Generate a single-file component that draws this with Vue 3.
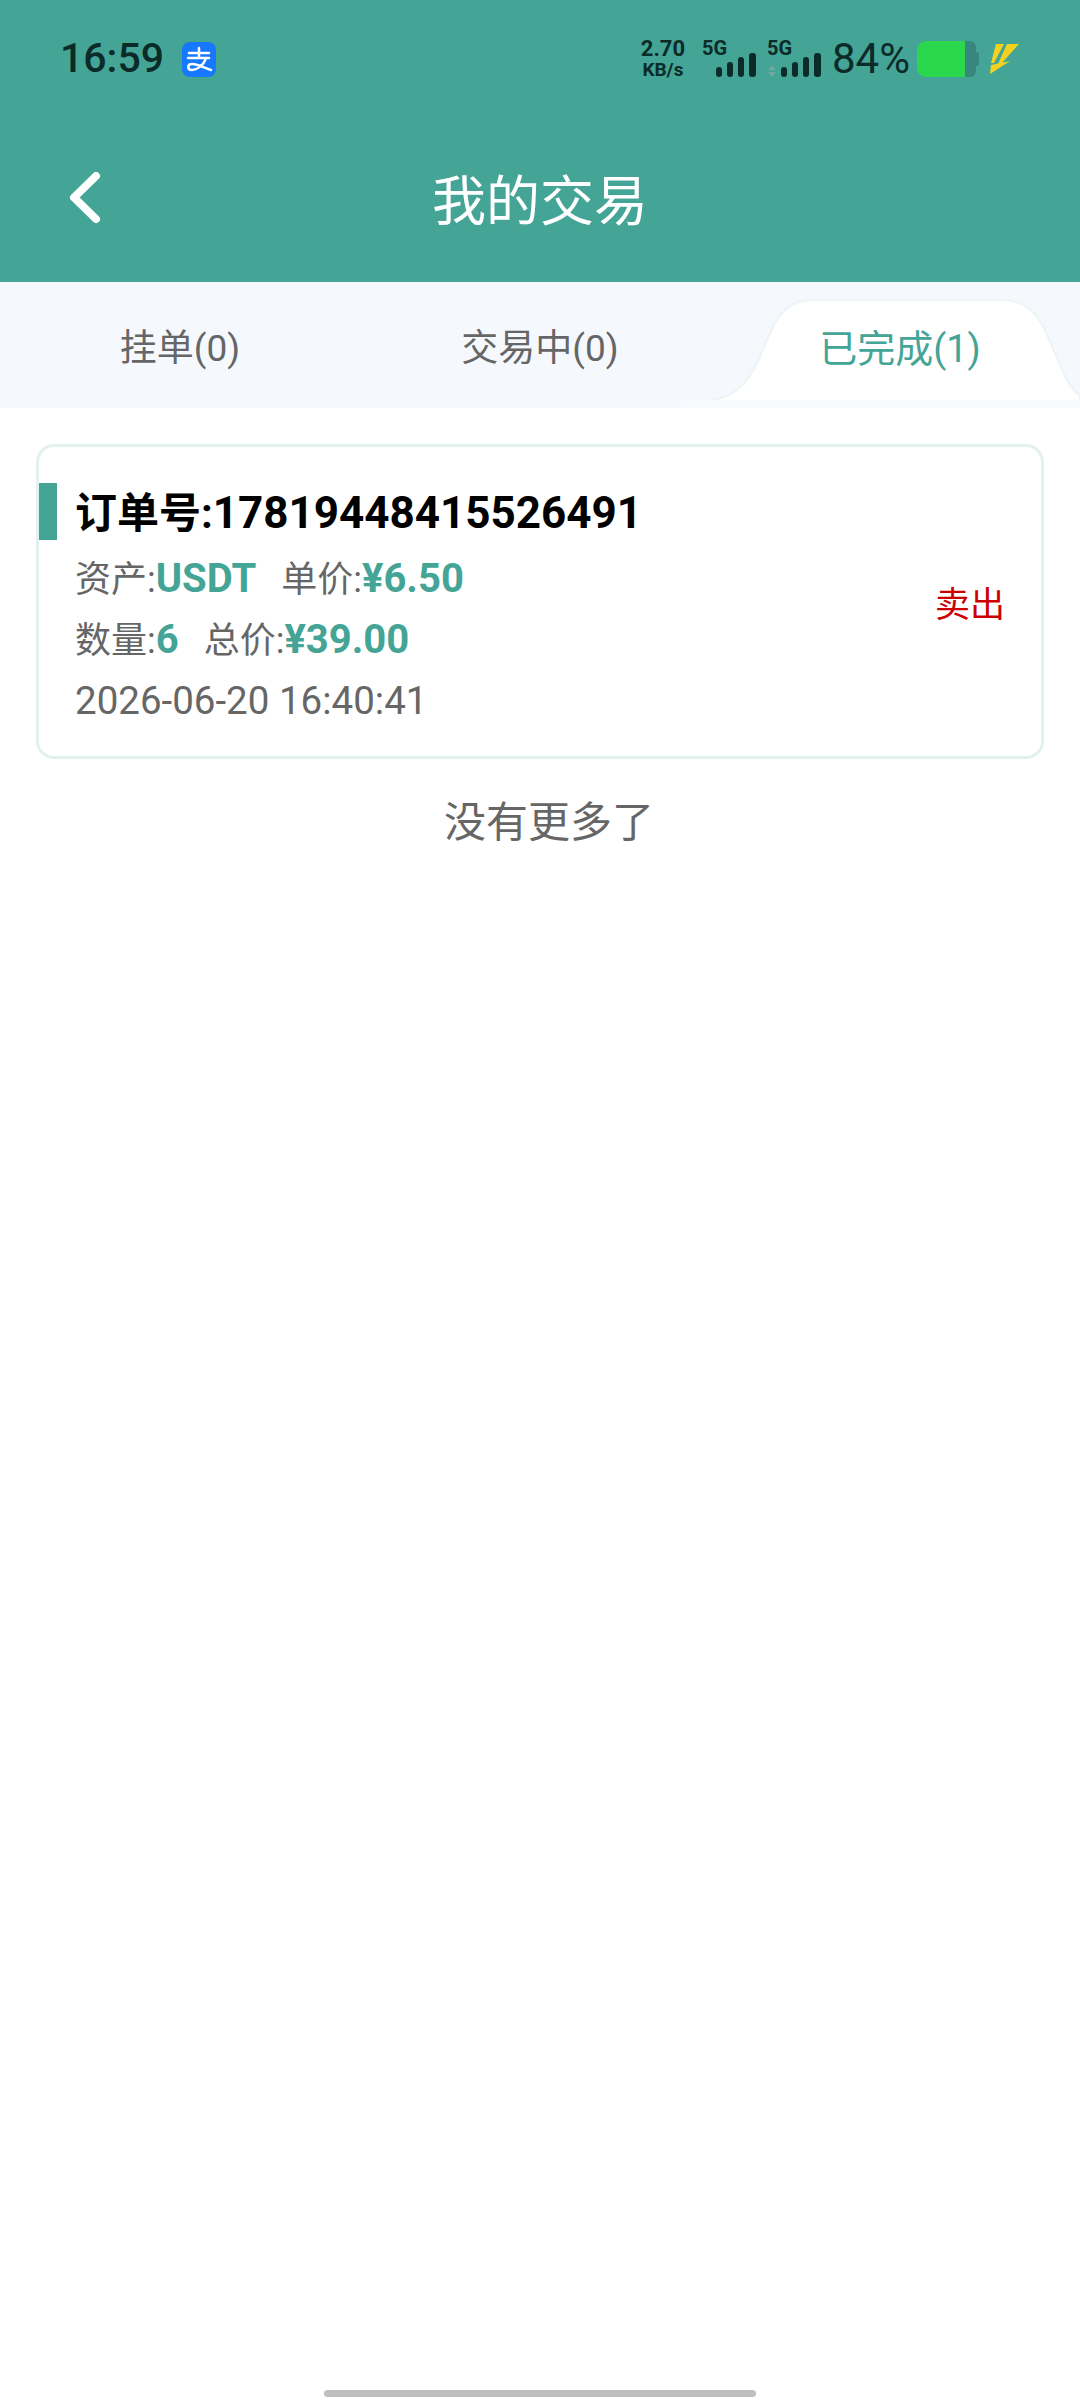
<script setup>
const tabs = [
  { label: '挂单(0)' },
  { label: '交易中(0)' },
  { label: '已完成(1)', active: true },
]

const order = {
  no: '17819448415526491',
  asset: 'USDT',
  price: '¥6.50',
  amount: '6',
  total: '¥39.00',
  time: '2026-06-20 16:40:41',
  side: '卖出',
}
</script>

<template>
  <div class="page">
    <header class="top">
      <div class="status">
        <div class="status-left">
          <span class="clock">16:59</span>
          <svg class="alipay" width="34" height="35" viewBox="0 0 34 35">
            <rect width="34" height="35" rx="8" fill="#1677ff" />
            <path d="M7 11h20M17 6v9M6 16h21M24 16c-2 7-9 12-14 12-5 0-5-6 0-6 6 0 12 4 19 6" fill="none" stroke="#fff" stroke-width="2.5" stroke-linecap="round" />
          </svg>
        </div>
        <div class="status-right">
          <div class="speed"><span>2.70</span><span class="unit">KB/s</span></div>
          <svg class="sim" width="54" height="50" viewBox="0 -6 54 50">
            <text x="0" y="15" class="sim-label">5G</text>
            <rect x="14" y="27" width="6" height="10" rx="3" />
            <rect x="25" y="22" width="6" height="15" rx="3" />
            <rect x="36" y="17" width="6" height="20" rx="3" />
            <rect x="47" y="13" width="7" height="24" rx="3" />
          </svg>
          <svg class="sim sim2" width="54" height="50" viewBox="0 -6 54 50">
            <text x="0" y="15" class="sim-label">5G</text>
            <path d="M1 30l4-5 4 5zM1 32l4 5 4-5z" fill="#6fa9a0" />
            <rect x="14" y="27" width="6" height="10" rx="3" />
            <rect x="25" y="22" width="6" height="15" rx="3" />
            <rect x="36" y="17" width="6" height="20" rx="3" />
            <rect x="47" y="13" width="7" height="24" rx="3" />
          </svg>
          <span class="percent">84%</span>
          <svg class="battery" width="64" height="38" viewBox="0 0 64 38">
            <path d="M49 1h5a6 6 0 0 1 6 6v24a6 6 0 0 1-6 6h-5z" fill="#38877f" />
            <rect x="60" y="12" width="3" height="14" rx="1.5" fill="#38877f" />
            <path d="M10 1h39v36H10a9 9 0 0 1-9-9V10a9 9 0 0 1 9-9z" fill="#2bd84d" />
          </svg>
          <svg class="bolt" width="32" height="30" viewBox="0 0 32 30">
            <path d="M8 0h8L6 19H3zM19 0h12L13 20h-3zM3 21l19-4L2 30z" fill="#f2d21f" />
          </svg>
        </div>
      </div>
      <div class="nav">
        <svg class="back" width="34" height="52" viewBox="0 0 34 52">
          <path d="M28 4L6 25.500 28 47" fill="none" stroke="#fff" stroke-width="8" stroke-linecap="round" stroke-linejoin="round" />
        </svg>
        <h1 class="title">我的交易</h1>
      </div>
    </header>

    <nav class="tabs">
      <svg class="tab-shape" width="400" height="109" viewBox="0 0 400 109">
        <path d="M0 102h20c30 0 46-14 58-40l14-32C100 12 112 1 132 1h190c20 0 32 9 42 28l14 32c6 14 12 30 22 35v6z" fill="#fff" stroke="#eef4f6" stroke-width="2" />
        <rect y="101" width="400" height="8" fill="#f7fbfe" />
      </svg>
      <span v-for="tab in tabs" :key="tab.label" class="tab" :class="{ active: tab.active }">{{ tab.label }}</span>
    </nav>

    <main class="list">
      <article class="card">
        <i class="mark"></i>
        <div class="info">
          <div class="order-no"><span class="order-label">订单号:</span>{{ order.no }}</div>
          <div class="row">
            <span>资产:<b>{{ order.asset }}</b></span>
            <span>单价:<b>{{ order.price }}</b></span>
          </div>
          <div class="row">
            <span>数量:<b>{{ order.amount }}</b></span>
            <span>总价:<b>{{ order.total }}</b></span>
          </div>
          <div class="row date">{{ order.time }}</div>
        </div>
        <span class="side">{{ order.side }}</span>
      </article>
      <p class="no-more">没有更多了</p>
    </main>

    <div class="home-bar"></div>
  </div>
</template>

<style scoped>
.page {
  position: relative;
  width: 1080px;
  height: 2400px;
  overflow: hidden;
  background: #fff;
  font-family: Roboto, "Noto Sans CJK SC", sans-serif;
}

.top {
  height: 282px;
  background: #44a496;
}

.status {
  display: flex;
  align-items: center;
  justify-content: space-between;
  height: 58px;
  padding: 30px 60px 0 60px;
  color: #0a2b28;
}

.status-left {
  display: flex;
  align-items: center;
  gap: 18px;
}

.clock {
  margin-top: -2px;
  font-size: 41px;
  font-weight: 500;
  line-height: 1;
}

.status-right {
  display: flex;
  align-items: center;
}

.speed {
  display: flex;
  flex-direction: column;
  align-items: center;
  margin-right: 17px;
  font-size: 22px;
  font-weight: 700;
  line-height: 22px;
}

.speed .unit {
  font-size: 19px;
  line-height: 20px;
}

.sim {
  fill: #0a2b28;
}

.sim2 {
  margin-left: 11px;
}

.sim-label {
  font-size: 20px;
  font-weight: 700;
}

.percent {
  margin-left: 11px;
  font-size: 42px;
  line-height: 1;
}

.battery {
  margin-left: 6px;
}

.bolt {
  margin-left: 8px;
}

.nav {
  position: relative;
  display: flex;
  align-items: center;
  justify-content: center;
  height: 110px;
  margin-top: 60px;
}

.back {
  position: absolute;
  left: 68px;
  top: 24px;
}

.title {
  margin: 0;
  color: #fff;
  font-size: 54px;
  font-weight: 400;
  line-height: 1;
}

.tabs {
  position: relative;
  display: grid;
  grid-template-columns: 360px 360px 360px;
  align-items: center;
  height: 126px;
  background: #f5f9fe;
}

.tab-shape {
  position: absolute;
  right: 0;
  top: 17px;
}

.tab {
  position: relative;
  text-align: center;
  color: #666;
  font-size: 37px;
}

.tab.active {
  color: #44a496;
  font-size: 38px;
}

.list {
  padding: 36px 36px 0;
}

.card {
  position: relative;
  display: flex;
  align-items: center;
  justify-content: space-between;
  box-sizing: border-box;
  height: 315px;
  padding: 10px 36px 0 36px;
  border: 3px solid #e3f1ee;
  border-radius: 18px;
}

.mark {
  position: absolute;
  left: 0;
  top: 36px;
  width: 18px;
  height: 57px;
  background: #44a496;
}

.order-no {
  margin: 1px 0 5px;
  color: #000;
  font-size: 44px;
  font-weight: 700;
  line-height: 60px;
}

.order-label {
  font-size: 42px;
}

.row {
  display: flex;
  gap: 25px;
  color: #666;
  font-size: 36px;
  line-height: 60px;
}

.row b {
  color: #44a496;
  font-size: 40px;
  font-weight: 700;
}

.row.date {
  font-size: 38.5px;
}

.side {
  margin-top: -10px;
  color: #cc0000;
  font-size: 35px;
}

.no-more {
  margin: 34px 0 0;
  padding-left: 18px;
  text-align: center;
  color: #666;
  font-size: 42px;
  line-height: 60px;
}

.home-bar {
  position: absolute;
  left: 324px;
  bottom: 3px;
  width: 432px;
  height: 7px;
  border-radius: 4px;
  background: #bebebe;
}
</style>
